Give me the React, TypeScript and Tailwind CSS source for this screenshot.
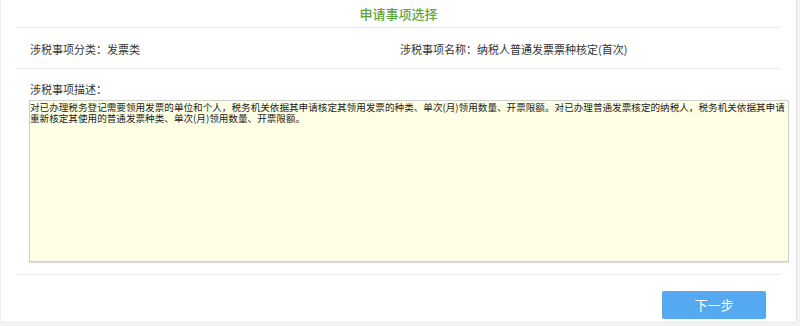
import React from "react";

const font = { fontFamily: '"Noto Sans CJK SC", "Noto Sans", sans-serif' };

export default function App() {
  return (
    <div className="w-[800px] h-[326px] bg-[#f2f2f2] pl-px" style={font}>
      <div className="w-[796px] h-[321px] bg-white border-r border-[#e4e4e4] flex flex-col">
        <div className="h-[27px] flex items-center justify-center text-[13px] leading-none font-medium text-[#5ea63a]">
          申请事项选择
        </div>
        <div className="mx-4 h-px bg-[#e8e8e8]" />
        <div className="h-[40px] flex items-center pl-[29px] pt-[2px] text-[11px] text-[#333]">
          <div className="w-[370px]">涉税事项分类：发票类</div>
          <div>涉税事项名称：纳税人普通发票票种核定(首次)</div>
        </div>
        <div className="mx-4 h-px bg-[#e8e8e8]" />
        <div className="pt-[13px] pl-[29px] text-[11px] leading-[15px] text-[#333]">涉税事项描述：</div>
        <div className="mt-[3px] ml-[28px] w-[760px] h-[162px] bg-[#ffffe6] border border-[#cfcfcf] shadow-[0_1px_1px_rgba(0,0,0,0.12)] pt-[1px] text-[9.6px] leading-[10.5px] text-[#222]">
          对已办理税务登记需要领用发票的单位和个人，税务机关依据其申请核定其领用发票的种类、单次(月)领用数量、开票限额。对已办理普通发票核定的纳税人，税务机关依据其申请重新核定其使用的普通发票种类、单次(月)领用数量、开票限额。
        </div>
        <div className="mt-[12px] mx-4 h-px bg-[#ececec]" />
        <div className="mt-[16px] flex justify-end pr-[30px]">
          <button className="w-[104px] h-[28px] bg-[#55a9f1] rounded-[2px] text-white text-[13px] flex items-center justify-center">
            下一步
          </button>
        </div>
      </div>
    </div>
  );
}
